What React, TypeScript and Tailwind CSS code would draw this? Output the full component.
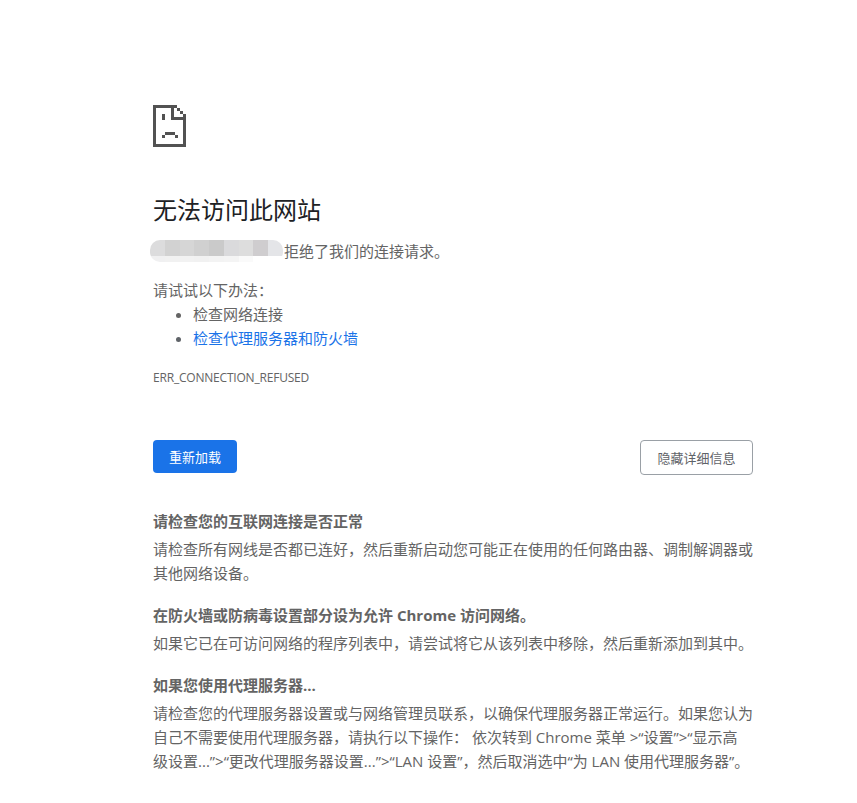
const FONT = "font-['Open_Sans','Noto_Sans_CJK_SC',sans-serif]";

function SadTab() {
  return (
    <svg width="33" height="42" viewBox="0 0 11 14" shapeRendering="crispEdges" className="block" fill="#525252">
      <path d="M0 0H8V1H9V2H10V3H11V14H0V0ZM1 1V13H10V5H6V1H1ZM7 1V4H10V3H9V2H8V1H7Z" fillRule="evenodd" />
      <rect x="3" y="3" width="1" height="2" />
      <rect x="4" y="9" width="3.33" height="1" />
      <rect x="3" y="10" width="1" height="1" />
      <rect x="7.33" y="10" width="1" height="1" />
    </svg>
  );
}

function Blur() {
  const top = ["bg-[#dcdcdd]", "bg-[#d2d2d2]", "bg-[#d6d6d6]", "bg-[#d0d0d0]", "bg-[#cacaca]", "bg-[#dadadc]", "bg-[#dddddd]", "bg-[#cfcdcf]", "bg-[#e4e5e8]"];
  const bottom = ["bg-[#f0f0f1]", "bg-[#f1f1f1]", "bg-[#f2f2f2]", "bg-[#f1f1f1]", "bg-[#f3f3f3]", "bg-[#f4f4f4]", "bg-[#fafafa]", "bg-[#ffffff]", "bg-[#ffffff]"];
  return (
    <span className="absolute left-[-3px] top-[1px] flex h-[22px] w-[133px] flex-col overflow-hidden rounded-[10px]">
      <span className="flex h-[16px]">
        {top.map((c, i) => (
          <span key={i} className={`${c} h-full flex-1`} />
        ))}
      </span>
      <span className="flex h-[6px]">
        {bottom.map((c, i) => (
          <span key={i} className={`${c} h-full flex-1`} />
        ))}
      </span>
    </span>
  );
}

export default function App() {
  return (
    <div className={`${FONT} min-h-[803px] bg-white pl-[153px] pt-[105px] text-[15px] leading-[24px] text-[#646464]`}>
      <div className="w-[600px]">
        <SadTab />
        <h1 className="mt-[47px] text-[24px] leading-[32px] font-normal text-[#202124]">无法访问此网站</h1>
        <p className="relative mt-[13px] pl-[131px]">
          <Blur />
          拒绝了我们的连接请求。
        </p>
        <p className="mt-[15px]">请试试以下办法：</p>
        <ul className="list-disc pl-[40px]">
          <li>检查网络连接</li>
          <li className="text-[#5f6368]">
            <span className="text-[#1a73e8]">检查代理服务器和防火墙</span>
          </li>
        </ul>
        <div className="mt-[20px] text-[12px] leading-[16px] tracking-[-0.2px]">ERR_CONNECTION_REFUSED</div>
        <div className="mt-[54px] flex items-start justify-between">
          <button className="h-[33px] w-[84px] rounded-[4px] bg-[#1a73e8] text-[13px] text-white">重新加载</button>
          <button className="h-[35px] w-[113px] rounded-[4px] border border-[#9aa0a6] text-[13px] text-[#5f6368]">隐藏详细信息</button>
        </div>
        <h2 className="mt-[34px] text-[15px] font-bold">请检查您的互联网连接是否正常</h2>
        <p className="mt-[4px]">请检查所有网线是否都已连好，然后重新启动您可能正在使用的任何路由器、调制解调器或其他网络设备。</p>
        <h2 className="mt-[18px] text-[15px] font-bold">在防火墙或防病毒设置部分设为允许 Chrome 访问网络。</h2>
        <p className="mt-[4px]">如果它已在可访问网络的程序列表中，请尝试将它从该列表中移除，然后重新添加到其中。</p>
        <h2 className="mt-[18px] text-[15px] font-bold">如果您使用代理服务器...</h2>
        <p className="mt-[4px]">请检查您的代理服务器设置或与网络管理员联系，以确保代理服务器正常运行。如果您认为自己不需要使用代理服务器，请执行以下操作： 依次转到 Chrome 菜单 &gt;“设置”&gt;“显示高<br />级设置...”&gt;“更改代理服务器设置...”&gt;“LAN 设置”，然后取消选中“为 LAN 使用代理服务器”。</p>
      </div>
    </div>
  );
}
